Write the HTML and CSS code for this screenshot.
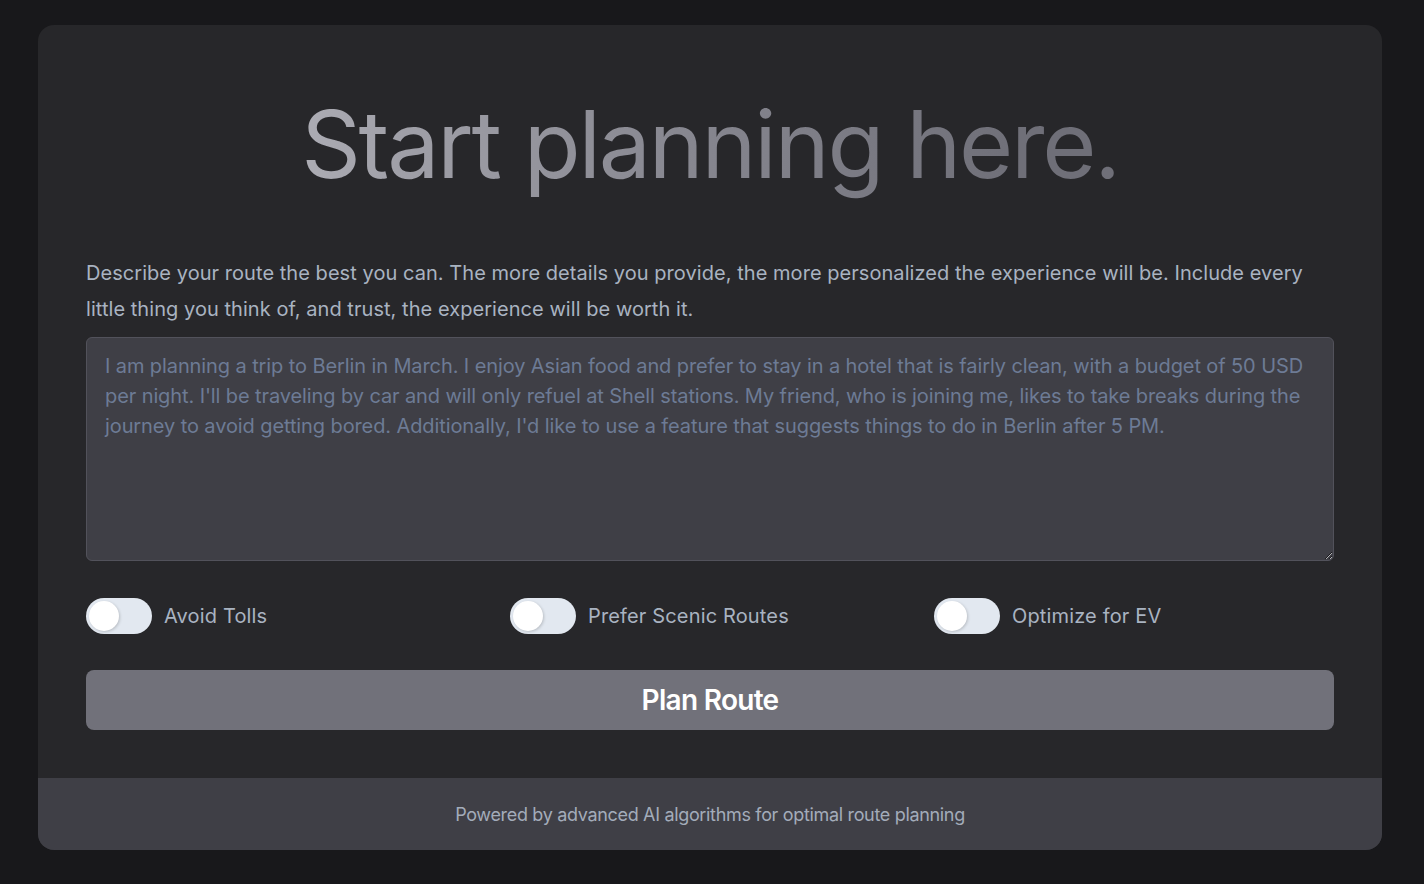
FILE: index.html
```html
<!DOCTYPE html>
<html lang="en">
<head>
<meta charset="utf-8">
<title>Start planning here.</title>
<link rel="stylesheet" href="styles.css">
</head>
<body>
<div class="page">
  <main class="card">
    <section class="content">
      <h1 class="title">Start planning here.</h1>
      <p class="intro">Describe your route the best you can. The more details you provide, the more personalized the experience will be. Include every little thing you think of, and trust, the experience will be worth it.</p>
      <textarea class="prompt" placeholder="I am planning a trip to Berlin in March. I enjoy Asian food and prefer to stay in a hotel that is fairly clean, with a budget of 50 USD per night. I'll be traveling by car and will only refuel at Shell stations. My friend, who is joining me, likes to take breaks during the journey to avoid getting bored. Additionally, I'd like to use a feature that suggests things to do in Berlin after 5 PM."></textarea>
      <div class="options">
        <label class="option"><span class="toggle"><span class="knob"></span></span><span class="option-label">Avoid Tolls</span></label>
        <label class="option"><span class="toggle"><span class="knob"></span></span><span class="option-label">Prefer Scenic Routes</span></label>
        <label class="option"><span class="toggle"><span class="knob"></span></span><span class="option-label">Optimize for EV</span></label>
      </div>
      <button class="plan">Plan Route</button>
    </section>
    <footer class="footer">Powered by advanced AI algorithms for optimal route planning</footer>
  </main>
</div>
</body>
</html>
```

FILE: styles.css
```css
* { box-sizing: border-box; }
html, body { margin: 0; padding: 0; }
body {
  background: #18181b;
  font-family: Inter, "Noto Sans", sans-serif;
}
.page {
  padding: 25px 42px 34px 38px;
}
.card {
  background: #27272a;
  border-radius: 16px;
  overflow: hidden;
  height: 825px;
  display: flex;
  flex-direction: column;
}
.content {
  flex: 1;
  padding: 64px 48px 48px;
  display: flex;
  flex-direction: column;
}
.title {
  margin: 0;
  text-align: center;
  font-size: 93px;
  font-weight: 400;
  letter-spacing: -2.2px;
  line-height: 110px;
  background: linear-gradient(90deg, #c8c8cf 0%, #a0a0a8 25%, #85858e 50%, #6f6f78 75%, #6f6f78 100%);
  -webkit-background-clip: text;
  background-clip: text;
  color: transparent;
}
.intro {
  margin: 56px 0 10px;
  font-size: 20px;
  line-height: 36px;
  color: #a9b3c1;
  letter-spacing: 0.05px;
}
.prompt {
  display: block;
  width: 100%;
  height: 224px;
  background: #3f3f46;
  border: 1px solid #52525b;
  border-radius: 6px;
  padding: 13px 18px;
  font-family: Inter, "Noto Sans", sans-serif;
  font-size: 20px;
  line-height: 30px;
  letter-spacing: -0.1px;
  color: #d4d4d8;
  resize: vertical;
  outline: none;
}
.prompt::placeholder { color: #6d7b95; }
.options {
  margin-top: 37px;
  display: grid;
  grid-template-columns: repeat(3, 1fr);
  gap: 24px;
}
.option {
  display: flex;
  align-items: center;
  gap: 12px;
}
.toggle {
  width: 66px;
  height: 36px;
  border-radius: 18px;
  background: #e2e8f0;
  padding: 3px;
  display: flex;
  align-items: center;
}
.knob {
  width: 30px;
  height: 30px;
  border-radius: 50%;
  background: #ffffff;
  box-shadow: 1px 1px 3px rgba(0,0,0,0.18);
}
.option-label {
  font-size: 20px;
  color: #a9b3c1;
  letter-spacing: 0.15px;
}
.plan {
  margin-top: 36px;
  height: 60px;
  width: 100%;
  border: none;
  border-radius: 8px;
  background: #71717a;
  color: #ffffff;
  font-family: Inter, "Noto Sans", sans-serif;
  font-size: 28px;
  font-weight: 600;
  letter-spacing: -0.7px;
}
.footer {
  height: 72px;
  background: #3f3f46;
  display: flex;
  align-items: center;
  justify-content: center;
  font-size: 18px;
  color: #a3acba;
  letter-spacing: -0.33px;
}
```
